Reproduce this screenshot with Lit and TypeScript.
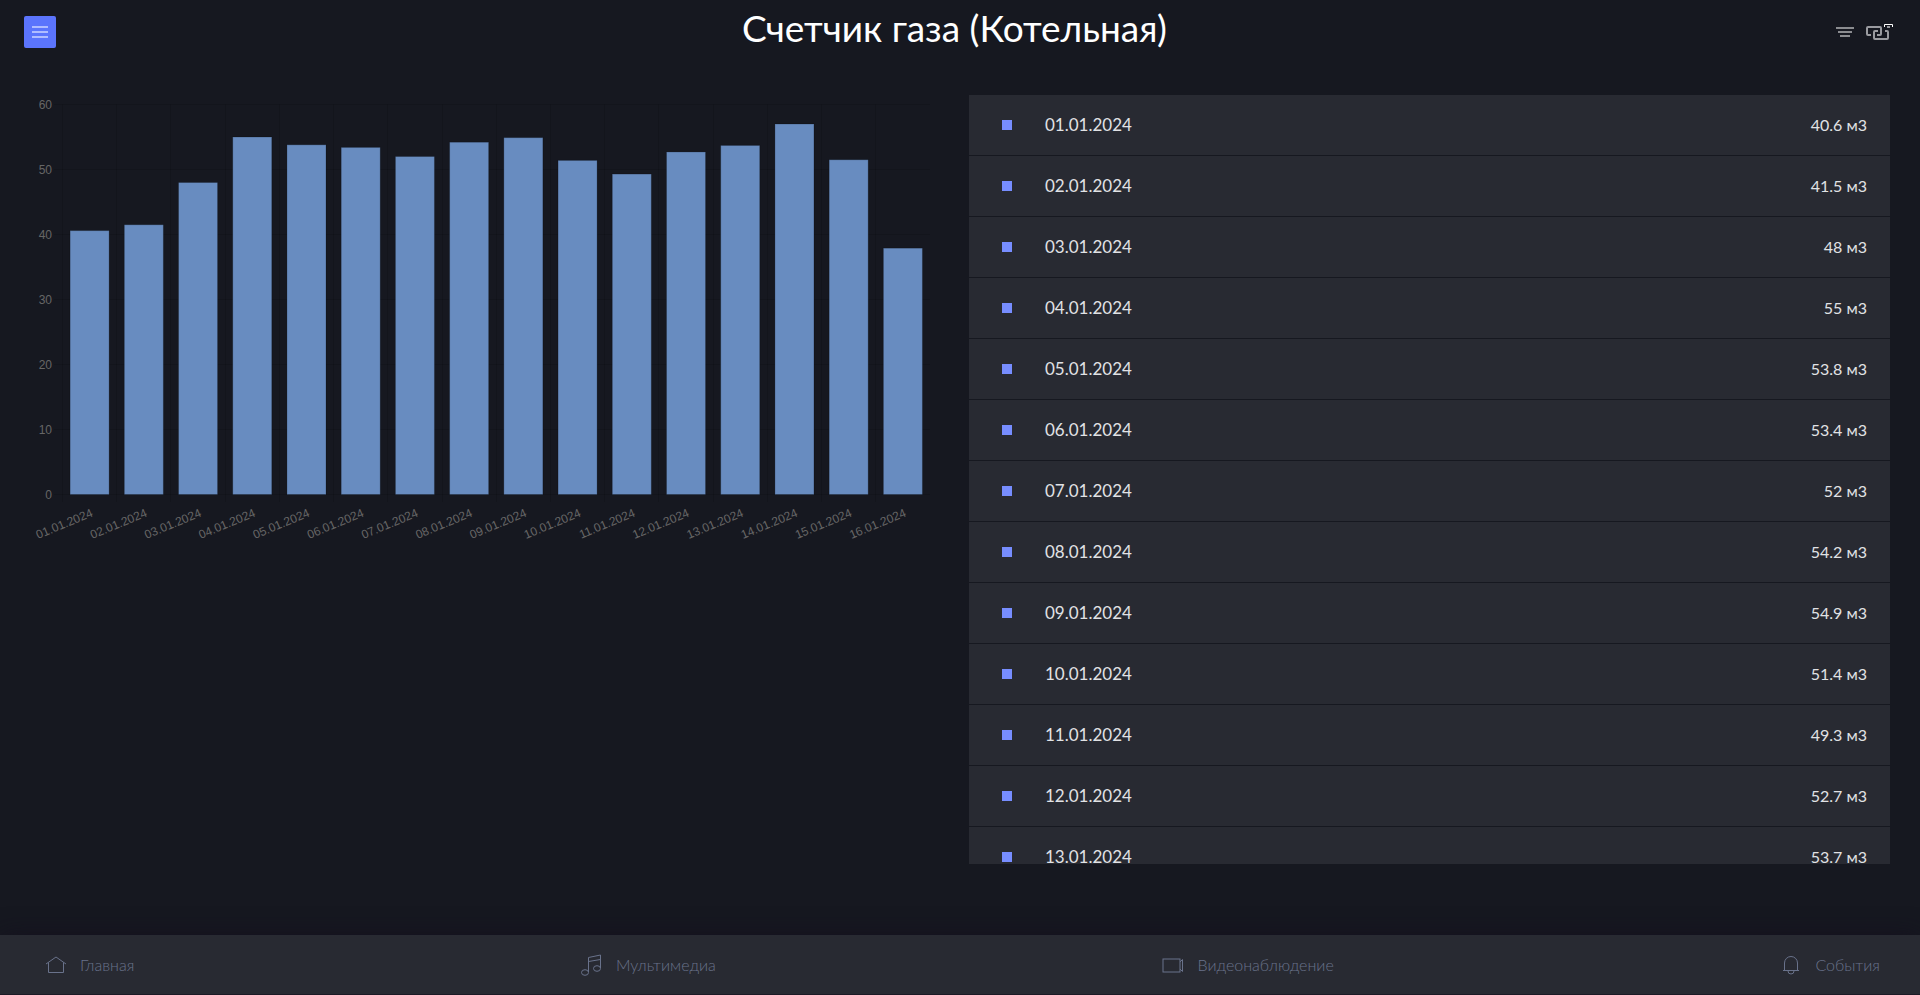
import { LitElement, html, svg, css } from "lit";
import { customElement } from "lit/decorators.js";

interface Reading {
  date: string;
  value: number;
}

const values = [40.6, 41.5, 48, 55, 53.8, 53.4, 52, 54.2, 54.9, 51.4, 49.3, 52.7, 53.7, 57, 51.5, 37.9];
const readings: Reading[] = values.map((value, i) => ({
  date: `${String(i + 1).padStart(2, "0")}.01.2024`,
  value,
}));

@customElement("usage-chart")
export class UsageChart extends LitElement {
  static styles = css`
    :host { display: block; padding-right: 21px; }
    .plot { display: block; width: 100%; height: auto; overflow: visible; }
    .label { font: 12px "Liberation Sans", Arial, sans-serif; fill: #666; text-anchor: end; }
    .grid { stroke: rgba(0, 0, 0, 0.12); stroke-width: 1; }
    .bar { fill: #688cc0; }
    .edge { fill: none; stroke: rgba(0, 0, 0, 0.2); stroke-width: 1; }
  `;

  render() {
    const left = 32.5;
    const top = 9.5;
    const bottom = 399.5;
    const right = 900;
    const step = (right - left) / readings.length;
    const scale = (bottom - top) / 60;
    const barWidth = step * 0.72;
    return html`
      <svg class="plot" viewBox="0 0 900 450" role="img" aria-label="Расход газа по дням">
        ${[0, 10, 20, 30, 40, 50, 60].map((tick) => {
          const y = bottom - tick * scale;
          return svg`
            <line class="grid" x1="24" x2=${right} y1=${y} y2=${y}></line>
            <text class="label" x="22" y=${y + 4}>${tick}</text>`;
        })}
        ${readings.map((r, i) => {
          const x = left + i * step;
          const gx = Math.floor(x) + 0.5;
          const bx = x + (step - barWidth) / 2;
          const y = bottom - r.value * scale;
          const tx = x + step / 2 + 4;
          return svg`
            <line class="grid" x1=${gx} x2=${gx} y1=${top} y2="407"></line>
            <rect class="bar" x=${bx} y=${y} width=${barWidth} height=${bottom - y}></rect>
            <rect class="edge" x=${bx} y=${y} width=${barWidth} height=${bottom - y}></rect>
            <text class="label" x=${tx} y="421" transform="rotate(-22.5 ${tx} 421)">${r.date}</text>`;
        })}
      </svg>
    `;
  }
}

@customElement("app-root")
export class AppRoot extends LitElement {
  static styles = css`
    :host {
      display: flex;
      flex-direction: column;
      height: 100vh;
      box-sizing: border-box;
      background: #161820;
      color: #e1e2e5;
      font-family: Lato, "Open Sans", sans-serif;
    }
    .header {
      display: grid;
      grid-template-columns: 1fr auto 1fr;
      align-items: center;
      height: 64px;
      padding: 0 27px 0 24px;
    }
    .title { margin: 0; padding: 0 8px 8px 0; font-size: 37px; line-height: 44px; font-weight: 400; color: #fff; }
    .menu {
      width: 32px;
      height: 32px;
      padding: 0;
      border: 0;
      border-radius: 2px;
      background: #5b74fc;
      display: grid;
      place-items: center;
    }
    .tools { display: flex; justify-content: flex-end; gap: 10px; }
    .tool { display: block; padding: 0; border: 0; background: none; }
    .icon { display: block; fill: none; }
    .main {
      flex: 1;
      min-height: 0;
      display: grid;
      grid-template-columns: 1fr 1fr;
      gap: 18px;
      padding: 31px 30px 71px;
    }
    .list { margin: 0; padding: 0; list-style: none; overflow-y: auto; scrollbar-width: none; background: #282a32; }
    .row {
      display: flex;
      align-items: center;
      height: 60px;
      padding: 0 23px 0 33px;
      border-bottom: 1px solid #161820;
    }
    .mark { width: 10px; height: 10px; margin-right: 33px; background: #778dff; }
    .date { flex: 1; font-size: 17px; line-height: 24px; }
    .value { font-size: 16px; line-height: 24px; }
    .nav {
      display: flex;
      justify-content: space-between;
      align-items: center;
      height: 59px;
      padding: 0 40px 0 44px;
      background: #282a32;
      border-bottom: 1px solid #1c1a26;
      box-shadow: 0 0 24px rgba(20, 14, 30, 0.7);
    }
    .link {
      display: flex;
      align-items: center;
      gap: 12px;
      color: #69728b;
      font-size: 16px;
      font-weight: 300;
      line-height: 24px;
      text-decoration: none;
    }
  `;

  render() {
    return html`
      <header class="header">
        <button class="menu" aria-label="Меню">
          <svg class="icon" width="16" height="12" stroke="#b0bcff" stroke-width="2">
            <path d="M0 1h16M0 6h16M0 11h16"></path>
          </svg>
        </button>
        <h1 class="title">Счетчик газа (Котельная)</h1>
        <div class="tools">
          <button class="tool" aria-label="Фильтр">
            <svg class="icon" width="20" height="18" stroke="#8b8c90" stroke-width="2">
              <path d="M1 5h18M3 9h14M5 13h10"></path>
            </svg>
          </button>
          <button class="tool" aria-label="Связь">
            <svg class="icon" width="28" height="18" stroke="#9a9ba0" stroke-width="2">
              <path d="M6 12H3Q2 12 2 11V5Q2 4 3 4H15Q16 4 16 5V11Q16 12 15 12H12"></path>
              <path d="M13 8H10Q9 8 9 9V15Q9 16 10 16H22Q23 16 23 15V9Q23 8 22 8H20"></path>
              <path d="M19.500 4V1.500H27.500V4" stroke="#fff" stroke-width="1"></path>
              <path d="M22 4h3"></path>
            </svg>
          </button>
        </div>
      </header>
      <main class="main">
        <usage-chart></usage-chart>
        <ul class="list">
          ${readings.map(
            (r) => html`<li class="row">
              <span class="mark"></span>
              <span class="date">${r.date}</span>
              <span class="value">${r.value} м3</span>
            </li>`,
          )}
        </ul>
      </main>
      <nav class="nav">
        <a class="link" href="#home">
          <svg class="icon" width="24" height="24" stroke="currentColor">
            <path d="M2 11 12 4l10 7M4.500 9.500v10h15v-10"></path>
          </svg>
          Главная
        </a>
        <a class="link" href="#media">
          <svg class="icon" width="24" height="24" stroke="currentColor">
            <path d="M8.500 19V4.500L20.500 2v13M8.500 8.500l12-2"></path>
            <ellipse cx="5" cy="19.500" rx="3.500" ry="2.800"></ellipse>
            <ellipse cx="17" cy="15.500" rx="3.500" ry="2.800"></ellipse>
          </svg>
          Мультимедиа
        </a>
        <a class="link" href="#video">
          <svg class="icon" width="24" height="24" stroke="currentColor">
            <rect x="2" y="6" width="17" height="13"></rect>
            <path d="M19 9l2.500-2.500v12L19 16"></path>
          </svg>
          Видеонаблюдение
        </a>
        <a class="link" href="#events">
          <svg class="icon" width="24" height="24" stroke="currentColor">
            <path d="M4 17.500h16M5.500 17.500V10a6.500 6.500 0 0 1 13 0v7.500M9 18a3 3 0 0 0 6 0"></path>
          </svg>
          События
        </a>
      </nav>
    `;
  }
}
